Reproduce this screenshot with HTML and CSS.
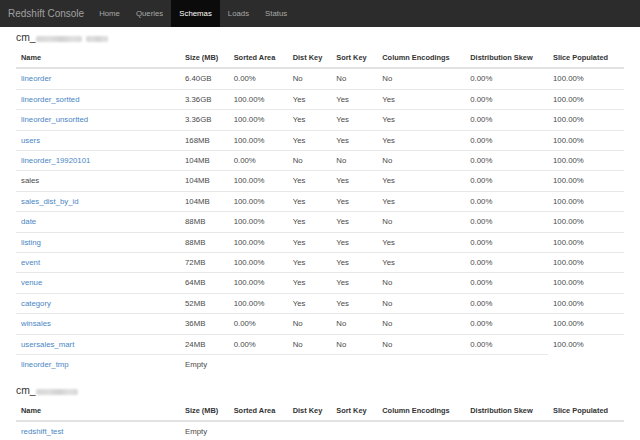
FILE: index.html
```html
<!DOCTYPE html>
<html>
<head>
<meta charset="utf-8">
<title>Redshift Console</title>
<link rel="stylesheet" href="styles.css">
</head>
<body>
<nav class="navbar">
  <a class="brand" href="#">Redshift Console</a>
  <ul class="nav">
    <li><a href="#">Home</a></li>
    <li><a href="#">Queries</a></li>
    <li class="active"><a href="#">Schemas</a></li>
    <li><a href="#">Loads</a></li>
    <li><a href="#">Status</a></li>
  </ul>
</nav>
<div class="container">
  <h4 class="schema">cm_<span class="blur b1"></span><span class="blur b2"></span></h4>
  <table class="table">
    <colgroup>
      <col class="c-name"><col class="c-size"><col class="c-sorted"><col class="c-dist"><col class="c-sort"><col class="c-enc"><col class="c-skew"><col class="c-slice">
    </colgroup>
    <thead>
      <tr><th>Name</th><th>Size (MB)</th><th>Sorted Area</th><th>Dist Key</th><th>Sort Key</th><th>Column Encodings</th><th>Distribution Skew</th><th>Slice Populated</th></tr>
    </thead>
    <tbody>
      <tr><td><a href="#">lineorder</a></td><td>6.40GB</td><td>0.00%</td><td>No</td><td>No</td><td>No</td><td>0.00%</td><td>100.00%</td></tr>
      <tr><td><a href="#">lineorder_sortted</a></td><td>3.36GB</td><td>100.00%</td><td>Yes</td><td>Yes</td><td>Yes</td><td>0.00%</td><td>100.00%</td></tr>
      <tr><td><a href="#">lineorder_unsortted</a></td><td>3.36GB</td><td>100.00%</td><td>Yes</td><td>Yes</td><td>Yes</td><td>0.00%</td><td>100.00%</td></tr>
      <tr><td><a href="#">users</a></td><td>168MB</td><td>100.00%</td><td>Yes</td><td>Yes</td><td>Yes</td><td>0.00%</td><td>100.00%</td></tr>
      <tr><td><a href="#">lineorder_19920101</a></td><td>104MB</td><td>0.00%</td><td>No</td><td>No</td><td>No</td><td>0.00%</td><td>100.00%</td></tr>
      <tr><td>sales</td><td>104MB</td><td>100.00%</td><td>Yes</td><td>Yes</td><td>Yes</td><td>0.00%</td><td>100.00%</td></tr>
      <tr><td><a href="#">sales_dist_by_id</a></td><td>104MB</td><td>100.00%</td><td>Yes</td><td>Yes</td><td>Yes</td><td>0.00%</td><td>100.00%</td></tr>
      <tr><td><a href="#">date</a></td><td>88MB</td><td>100.00%</td><td>Yes</td><td>Yes</td><td>No</td><td>0.00%</td><td>100.00%</td></tr>
      <tr><td><a href="#">listing</a></td><td>88MB</td><td>100.00%</td><td>Yes</td><td>Yes</td><td>Yes</td><td>0.00%</td><td>100.00%</td></tr>
      <tr><td><a href="#">event</a></td><td>72MB</td><td>100.00%</td><td>Yes</td><td>Yes</td><td>Yes</td><td>0.00%</td><td>100.00%</td></tr>
      <tr><td><a href="#">venue</a></td><td>64MB</td><td>100.00%</td><td>Yes</td><td>Yes</td><td>No</td><td>0.00%</td><td>100.00%</td></tr>
      <tr><td><a href="#">category</a></td><td>52MB</td><td>100.00%</td><td>Yes</td><td>Yes</td><td>No</td><td>0.00%</td><td>100.00%</td></tr>
      <tr><td><a href="#">winsales</a></td><td>36MB</td><td>0.00%</td><td>No</td><td>No</td><td>No</td><td>0.00%</td><td>100.00%</td></tr>
      <tr><td><a href="#">usersales_mart</a></td><td>24MB</td><td>0.00%</td><td>No</td><td>No</td><td>No</td><td>0.00%</td><td>100.00%</td></tr>
      <tr><td><a href="#">lineorder_tmp</a></td><td>Empty</td><td></td><td></td><td></td><td></td><td></td></tr>
    </tbody>
  </table>
  <h4 class="schema">cm_<span class="blur b3"></span></h4>
  <table class="table">
    <colgroup>
      <col class="c-name"><col class="c-size"><col class="c-sorted"><col class="c-dist"><col class="c-sort"><col class="c-enc"><col class="c-skew"><col class="c-slice">
    </colgroup>
    <thead>
      <tr><th>Name</th><th>Size (MB)</th><th>Sorted Area</th><th>Dist Key</th><th>Sort Key</th><th>Column Encodings</th><th>Distribution Skew</th><th>Slice Populated</th></tr>
    </thead>
    <tbody>
      <tr><td><a href="#">redshift_test</a></td><td>Empty</td></tr>
    </tbody>
  </table>
</div>
</body>
</html>
```

FILE: styles.css
```css
html, body {
  margin: 0;
  padding: 0;
  background: #fff;
}
body {
  font-family: "Liberation Sans", Arial, Helvetica, sans-serif;
  color: #4a4a4a;
  font-size: 7.8px;
}
a {
  color: #4a86c4;
  text-decoration: none;
}

.navbar {
  display: flex;
  align-items: stretch;
  height: 27px;
  background: #2c2c2c;
}
.brand {
  display: flex;
  align-items: center;
  padding: 0 7px 0 8px;
  font-size: 10px;
  color: #a0a0a0;
}
.nav {
  display: flex;
  margin: 0;
  padding: 0;
  list-style: none;
}
.nav li {
  display: flex;
}
.nav li a {
  display: flex;
  align-items: center;
  padding: 0 8px;
  font-size: 7.8px;
  color: #a8a8a8;
}
.nav li.active a {
  background: #0b0b0b;
  color: #fff;
}

.container {
  padding: 0 16px;
}
.schema {
  margin: 4px 0 3px;
  height: 14px;
  line-height: 14px;
  font-size: 10.4px;
  font-weight: normal;
  color: #333;
  display: flex;
  align-items: center;
}
.blur {
  display: inline-block;
  height: 6px;
  margin-top: 2px;
  background: linear-gradient(90deg, #d6d6d6, #dedede 30%, #d2d2d2 55%, #e0e0e0 80%, #d8d8d8);
  filter: blur(1.2px);
  border-radius: 2px;
}
.b1 { width: 46px; }
.b2 { width: 22px; margin-left: 4px; }
.b3 { width: 42px; }

.table {
  width: 608px;
  table-layout: fixed;
  border-collapse: collapse;
  border-spacing: 0;
  margin-bottom: 9px;
}
.c-name { width: 164px; }
.c-size { width: 48.7px; }
.c-sorted { width: 59px; }
.c-dist { width: 43.6px; }
.c-sort { width: 46px; }
.c-enc { width: 88px; }
.c-skew { width: 82.7px; }
.c-slice { width: 76px; }

.table th,
.table td {
  padding: 4px 5px;
  line-height: 11.4px;
  text-align: left;
  vertical-align: middle;
  white-space: nowrap;
}
.table th {
  font-size: 7.4px;
  font-weight: bold;
  color: #333;
  border-bottom: 2px solid #e2e2e2;
}
.table td {
  border-top: 1px solid #e8e8e8;
}
```
